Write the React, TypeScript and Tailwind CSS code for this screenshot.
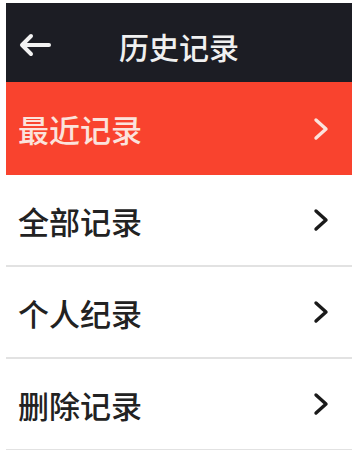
import React from "react";

const Chevron = ({ color }: { color: string }) => (
  <svg width="20" height="24" viewBox="0 0 20 24" fill="none">
    <polyline points="4,3 14,12 4,21" stroke={color} strokeWidth="3.4" strokeLinecap="round" strokeLinejoin="round" />
  </svg>
);

const rows = ["全部记录", "个人纪录", "删除记录"];

export default function App() {
  return (
    <div
      className="w-[356px] h-[450px] bg-white pl-[6px] pr-[4px] pt-[3px] overflow-hidden"
      style={{ fontFamily: '"Noto Sans CJK SC", "Noto Sans", sans-serif' }}
    >
      <div className="relative h-[79px] bg-[#1c1d24] flex items-center justify-center">
        <svg className="absolute left-[12px] top-[30px]" width="34" height="24" viewBox="0 0 34 24" fill="none">
          <polyline points="13,3 4,12 13,21" stroke="#f2f2f2" strokeWidth="4" strokeLinecap="round" strokeLinejoin="round" />
          <line x1="5" y1="12" x2="31" y2="12" stroke="#f2f2f2" strokeWidth="4" strokeLinecap="round" />
        </svg>
        <span className="text-[30px] leading-none font-medium text-[#f0f0f0] mt-[6px]">历史记录</span>
      </div>
      <div className="h-[93px] bg-[#f9432e] flex items-center justify-between pl-[12px] pr-[20px]">
        <span className="text-[31px] leading-none font-medium text-[#fbe3dc]">最近记录</span>
        <Chevron color="#fbe3dc" />
      </div>
      {rows.map((r) => (
        <div key={r} className="h-[92px] border-b-2 border-[#e2e2e2] flex items-center justify-between pl-[12px] pr-[20px]">
          <span className="text-[31px] leading-none font-medium text-[#222222]">{r}</span>
          <Chevron color="#1a1a1a" />
        </div>
      ))}
    </div>
  );
}
